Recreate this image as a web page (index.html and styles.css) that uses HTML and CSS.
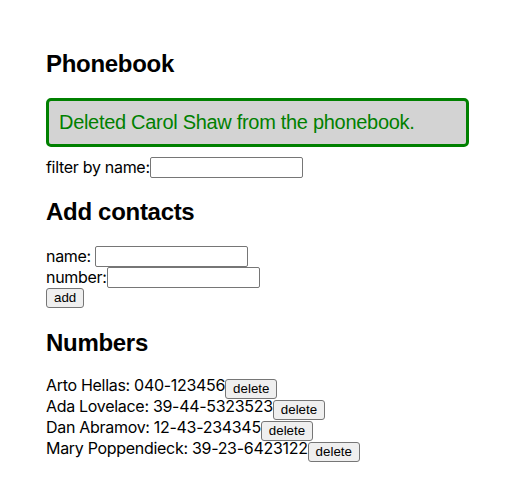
FILE: index.html
```html
<!DOCTYPE html>
<html>
<head>
<meta charset="utf-8">
<link rel="stylesheet" href="styles.css">
</head>
<body>
<div class="app">
  <h2>Phonebook</h2>
  <div class="notification">Deleted Carol Shaw from the phonebook.</div>
  <div class="row">filter by name:<input class="field"></div>
  <h2>Add contacts</h2>
  <form>
    <div class="row">name: <input class="field"></div>
    <div class="row">number:<input class="field"></div>
    <div class="row"><button type="button" class="btn">add</button></div>
  </form>
  <h2>Numbers</h2>
  <div class="row person">Arto Hellas: 040-123456<button class="btn">delete</button></div>
  <div class="row person">Ada Lovelace: 39-44-5323523<button class="btn">delete</button></div>
  <div class="row person">Dan Abramov: 12-43-234345<button class="btn">delete</button></div>
  <div class="row person">Mary Poppendieck: 39-23-6423122<button class="btn">delete</button></div>
</div>
</body>
</html>
```
FILE: styles.css
```css
body {
  margin: 0;
  font-family: Inter, "Liberation Sans", sans-serif;
  font-size: 16px;
  letter-spacing: -0.3px;
  color: #000;
}
.app {
  padding: 30.5px 50px 20px 46px;
}
h2 {
  font-family: "Liberation Sans", Arial, sans-serif;
  font-size: 24px;
  font-weight: 700;
  letter-spacing: -0.3px;
  margin: 0.83em 0;
}
.notification {
  font-family: "Liberation Sans", Arial, sans-serif;
  letter-spacing: -0.3px;
  color: green;
  background: lightgrey;
  font-size: 20px;
  line-height: 23px;
  border: 3px solid green;
  border-radius: 5px;
  padding: 10px;
  margin-bottom: 10px;
}
form { margin: 0; }
.row {
  height: 21px;
  line-height: 21px;
}
.person {
  line-height: 17.5px;
}
.field {
  font-family: "Liberation Sans", Arial, sans-serif;
  font-size: 13.33px;
  letter-spacing: 0;
  width: 147px;
  height: 17px;
  padding: 1px 2px;
  margin: 0;
  border: 1px solid #767676;
  border-radius: 2px;
  box-sizing: content-box;
  vertical-align: top;
}
.btn {
  font-family: "Liberation Sans", Arial, sans-serif;
  font-size: 13.33px;
  letter-spacing: 0;
  line-height: normal;
  padding: 1px 7px 2px;
  margin: 0;
  border: 1px solid #767676;
  border-radius: 3px;
  background: #efefef;
  color: #000;
  vertical-align: top;
}
.person .btn {
  margin-top: 2.5px;
}
```
